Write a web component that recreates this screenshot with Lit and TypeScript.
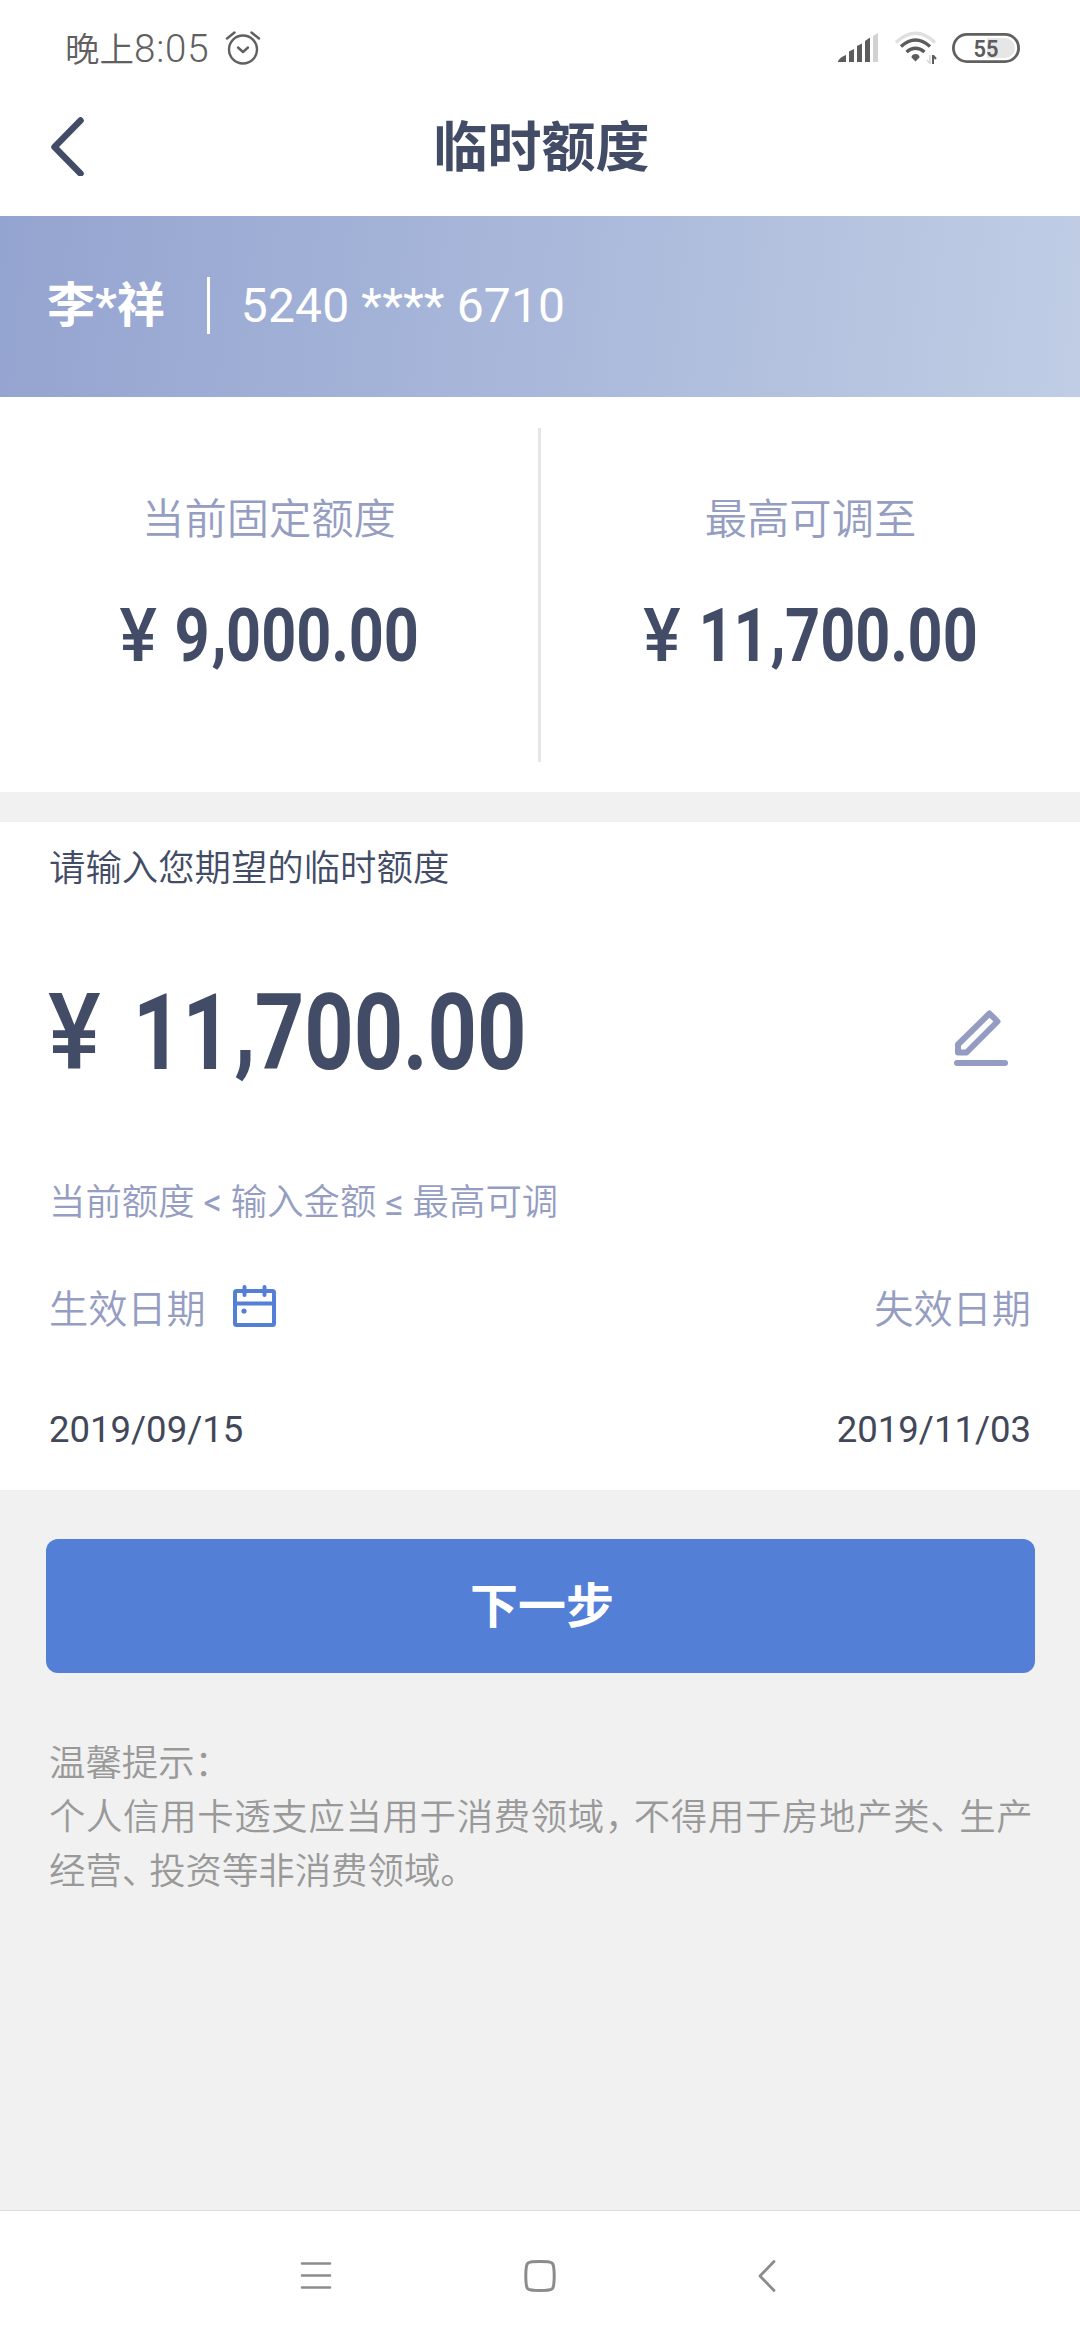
import { LitElement, html, css } from "lit";
import { customElement, property } from "lit/decorators.js";

@customElement("money-amount")
export class MoneyAmount extends LitElement {
  @property() value = "";

  static styles = css`
    :host {
      display: block;
      font-family: Roboto, "Noto Sans CJK SC", sans-serif;
      font-weight: 700;
      color: #424c66;
      white-space: nowrap;
    }
    .scaled {
      display: inline-block;
      transform: scaleX(0.822);
      transform-origin: var(--amount-origin, center);
    }
    .yen {
      display: inline-block;
      font-weight: 500;
      transform: scaleX(1.15);
      transform-origin: left center;
      margin-right: var(--yen-gap, 0.37em);
    }
    .comma {
      position: relative;
      top: -0.06em;
      padding-left: 0.03em;
      margin-right: -0.01em;
    }
    .dot {
      margin: 0 -0.005em;
    }
  `;

  render() {
    const parts = [...this.value].map((ch) =>
      ch === "," ? html`<span class="comma">,</span>` : ch === "." ? html`<span class="dot">.</span>` : ch
    );
    return html`<span class="scaled"><span class="yen">¥</span>${parts}</span>`;
  }
}

@customElement("app-root")
export class AppRoot extends LitElement {
  static styles = css`
    :host {
      display: flex;
      flex-direction: column;
      width: 1080px;
      height: 2340px;
      background: #f1f1f1;
      font-family: Roboto, "Noto Sans CJK SC", sans-serif;
      color: #424c66;
      overflow: hidden;
    }
    svg {
      display: block;
      flex: none;
    }
    .status {
      height: 96px;
      flex: none;
      display: flex;
      align-items: center;
      background: #fff;
      padding: 0 60px 0 65px;
      box-sizing: border-box;
      color: #606060;
    }
    .time {
      display: flex;
      align-items: baseline;
      font: 350 34.5px/48px "Noto Sans CJK SC", sans-serif;
      margin-right: 16px;
      white-space: nowrap;
    }
    .clock {
      font: 300 38.5px/48px Roboto, sans-serif;
      letter-spacing: 0.8px;
    }
    .spacer {
      flex: 1;
    }
    .signal {
      margin-right: 16px;
    }
    .wifi {
      margin-right: 15px;
    }
    .header {
      height: 120px;
      flex: none;
      box-sizing: border-box;
      padding: 0 48px 20px;
      display: grid;
      grid-template-columns: 40px 1fr 40px;
      align-items: center;
      background: #fff;
    }
    .title {
      margin: 0;
      padding: 0 0 5px 3px;
      text-align: center;
      font: 700 54px/70px "Noto Sans CJK SC", sans-serif;
    }
    .banner {
      height: 181px;
      flex: none;
      box-sizing: border-box;
      padding: 0 47px 2px;
      display: flex;
      align-items: center;
      color: #fff;
      background: linear-gradient(96deg, #94a4d0 0%, #a9b8da 50%, #c0cde5 100%);
    }
    .name {
      font: 700 48px/60px Roboto, "Noto Sans CJK SC", sans-serif;
    }
    .bar {
      width: 3px;
      height: 57px;
      background: #fff;
      margin: 0 31px 0 42px;
    }
    .card {
      font-size: 48px;
      line-height: 60px;
      letter-spacing: 0.15px;
    }
    .limits {
      height: 395px;
      flex: none;
      box-sizing: border-box;
      padding: 31px 0 30px;
      display: grid;
      grid-template-columns: 538px 3px 539px;
      background: #fff;
    }
    .rule {
      background: #e6e6e6;
    }
    .limit {
      padding-top: 58px;
      display: flex;
      flex-direction: column;
      align-items: center;
    }
    .limit-label {
      font: 350 42.3px/60px "Noto Sans CJK SC", sans-serif;
      color: #959dc2;
    }
    .limit money-amount {
      margin-top: 50px;
      font-size: 74.5px;
      line-height: 80px;
    }
    .form {
      height: 668px;
      flex: none;
      margin-top: 30px;
      box-sizing: border-box;
      padding: 19px 49px 0;
      background: #fff;
    }
    .prompt {
      font: 350 36.4px/48px "Noto Sans CJK SC", sans-serif;
    }
    .entry {
      height: 100px;
      margin-top: 95px;
      display: flex;
      justify-content: space-between;
      align-items: center;
      padding-right: 23px;
    }
    .entry money-amount {
      --amount-origin: left center;
      --yen-gap: 0.45em;
      font-size: 105px;
      line-height: 100px;
      margin-left: -1px;
    }
    .edit {
      margin-top: 8px;
    }
    .hint {
      margin-top: 95px;
      font: 350 36.4px/48px Roboto, "Noto Sans CJK SC", sans-serif;
      color: #959dc2;
    }
    .op {
      font-weight: 400;
    }
    .row {
      display: flex;
      align-items: center;
      justify-content: space-between;
    }
    .labels {
      margin-top: 55px;
      height: 48px;
      font: 350 39.2px/48px "Noto Sans CJK SC", sans-serif;
      color: #959dc2;
    }
    .start {
      display: flex;
      align-items: center;
      gap: 27px;
    }
    .dates {
      margin-top: 80px;
      font-size: 36.5px;
      line-height: 40px;
      color: #424859;
    }
    .next {
      display: block;
      height: 134px;
      flex: none;
      margin: 49px 45px 0 46px;
      padding: 0 0 9px 3px;
      border: 0;
      border-radius: 12px;
      background: #537fd7;
      color: #fff;
      font: 700 48px/60px "Noto Sans CJK SC", sans-serif;
    }
    .tips {
      margin: 60px 49px 0;
      flex: 1;
      font: 350 36.4px/54px "Noto Sans CJK SC", sans-serif;
      color: #999;
      white-space: nowrap;
    }
    .tips p {
      margin: 0;
    }
    .wide {
      letter-spacing: 0.67px;
    }
    .punct {
      letter-spacing: -9px;
    }
    .wide .punct {
      letter-spacing: -7.5px;
    }
    .nav {
      height: 130px;
      flex: none;
      box-sizing: border-box;
      border-top: 1px solid #dcdcdc;
      background: #fff;
      display: flex;
      justify-content: center;
      align-items: center;
      gap: 192px;
    }
  `;

  private statusBar() {
    return html`<div class="status">
      <span class="time">晚上<span class="clock">8:05</span></span>
      <svg width="36" height="36" viewBox="0 0 36 36" fill="none" stroke="#606060" stroke-width="2.4" stroke-linecap="round" stroke-linejoin="round">
        <circle cx="18" cy="19.5" r="14" />
        <path d="M13 17.5l5 4.5 5-4.5" />
        <path d="M2 8.500L9.500 2.500M34 8.500L26.500 2.500" />
      </svg>
      <span class="spacer"></span>
      <svg class="signal" width="40" height="30" viewBox="0 0 40 30" fill="#5c5c5c">
        <path d="M0 29V28Q3 23.500 8 22V29Z" />
        <path d="M11 29V18.500L16 16V29Z" />
        <path d="M19 29V13L24 10.500V29Z" />
        <path d="M27 29V8L32 4.500V29Z" />
        <path d="M35 29V3L40 0V29Z" fill="#d2d2d2" />
      </svg>
      <svg class="wifi" width="43" height="34" viewBox="0 0 43 34" fill="none" stroke="#5c5c5c" stroke-width="3.400">
        <path d="M2 11.500Q21.500-7 41 11.500" stroke="#e0e0e0" />
        <path d="M7 15.500Q21.500 2.500 36 15.500" />
        <path d="M12.500 21Q21.500 13.500 30.500 21" />
        <path d="M17.500 26.500a4 3.500 0 0 1 8 0L21.500 30.500Z" fill="#5c5c5c" stroke="none" />
        <path d="M39 24V33M39 24.500L42 28" stroke-width="2" />
        <path d="M36 24V33M36 32.500L33 29" stroke="#d8d8d8" stroke-width="1.600" />
      </svg>
      <svg width="68" height="30" viewBox="0 0 68 30">
        <path d="M35 5H53a10 10 0 0 1 0 20H35Z" fill="#e6e6e6" />
        <rect x="1.400" y="1.400" width="65.200" height="27.200" rx="13.600" fill="none" stroke="#606060" stroke-width="2.800" />
        <text x="21.500" y="23.800" textLength="25" lengthAdjust="spacingAndGlyphs" font-family="Roboto, sans-serif" font-weight="600" font-size="24.500" fill="#5c5c5c">55</text>
      </svg>
    </div>`;
  }

  render() {
    return html`
      ${this.statusBar()}
      <div class="header">
        <svg width="40" height="60" viewBox="0 0 40 60" fill="none" stroke="#424c66" stroke-width="6.500" stroke-linecap="round" stroke-linejoin="round">
          <path d="M32.500 4.500L6.500 31L32.500 57.500" />
        </svg>
        <h1 class="title">临时额度</h1>
      </div>
      <div class="banner">
        <span class="name">李*祥</span>
        <span class="bar"></span>
        <span class="card">5240 **** 6710</span>
      </div>
      <div class="limits">
        <div class="limit">
          <span class="limit-label">当前固定额度</span>
          <money-amount value="9,000.00"></money-amount>
        </div>
        <div class="rule"></div>
        <div class="limit">
          <span class="limit-label">最高可调至</span>
          <money-amount value="11,700.00"></money-amount>
        </div>
      </div>
      <div class="form">
        <div class="prompt">请输入您期望的临时额度</div>
        <div class="entry">
          <money-amount value="11,700.00"></money-amount>
          <svg class="edit" width="54" height="58" viewBox="0 0 54 58" fill="none" stroke="#949cc2" stroke-linejoin="round" stroke-linecap="round">
            <path d="M35.500 4.500L43.500 12.500L12.500 43.500H4V35.500Z" stroke-width="6" />
            <path d="M3 54H51" stroke-width="6" />
          </svg>
        </div>
        <div class="hint">当前额度 <span class="op">&lt;</span> 输入金额 <span class="op">≤</span> 最高可调</div>
        <div class="row labels">
          <span class="start">
            生效日期
            <svg width="44" height="42" viewBox="0 0 44 42" fill="none" stroke="#537fd7" stroke-width="4">
              <rect x="2" y="6" width="39" height="34" rx="1.500" />
              <path d="M2 18.500H41" />
              <path d="M11.500 2V10M31.500 2V10" stroke-linecap="round" />
              <circle cx="11" cy="26" r="2.600" fill="#537fd7" stroke="none" />
            </svg>
          </span>
          <span>失效日期</span>
        </div>
        <div class="row dates">
          <span>2019/09/15</span>
          <span>2019/11/03</span>
        </div>
      </div>
      <button class="next">下一步</button>
      <div class="tips">
        <p>温馨提示：</p>
        <p class="wide">个人信用卡透支应当用于消费领域<span class="punct">，</span>不得用于房地产类<span class="punct">、</span>生产</p>
        <p>经营<span class="punct">、</span>投资等非消费领域。</p>
      </div>
      <div class="nav">
        <svg width="32" height="34" viewBox="0 0 32 34" fill="none" stroke="#8c8c8c" stroke-width="2.600" stroke-linecap="round">
          <path d="M2 4.500H30M2 16.500H30M2 28.500H30" />
        </svg>
        <svg width="32" height="34" viewBox="0 0 32 34" fill="none" stroke="#8c8c8c" stroke-width="3">
          <path d="M16 2.500C25 2.500 27 2.800 28.500 4.500C30 6.500 30.200 9 30.200 17S30 27.500 28.500 29.500C27 31.200 25 31.500 16 31.500S5 31.200 3.500 29.500C2 27.500 1.800 25 1.800 17S2 6.500 3.500 4.500C5 2.800 7 2.500 16 2.500Z" />
        </svg>
        <svg width="32" height="34" viewBox="0 0 32 34" fill="none" stroke="#8c8c8c" stroke-width="2.800" stroke-linecap="round" stroke-linejoin="round">
          <path d="M26 2.500L12 17L26 31.500" />
        </svg>
      </div>
    `;
  }
}
